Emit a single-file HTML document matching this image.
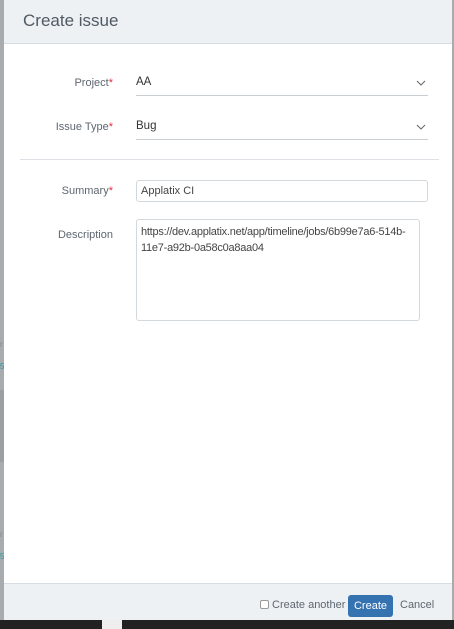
<!DOCTYPE html>
<html><head><style>
*{box-sizing:border-box;margin:0;padding:0}
body{width:454px;height:629px;overflow:hidden;background:#a9acae;font-family:"Liberation Sans",sans-serif;position:relative}
.modal{position:absolute;left:4px;top:0;width:448px;height:620px;background:#fff}
.hdr{position:absolute;left:0;top:0;width:448px;height:44px;background:#eef1f4;border-bottom:1px solid #d5dce3}
.hdr span{position:absolute;left:19px;top:11px;font-size:17px;color:#505a64}
.lbl{position:absolute;right:339px;font-size:11px;color:#5e6670;text-align:right}
.lbl i{color:#e0303a;font-style:normal}
.sel{position:absolute;left:132px;width:292px;height:21px;border-bottom:1.5px solid #c9ced3;font-size:11.5px;color:#333;padding-top:1px}
.sel svg{position:absolute;right:2px;top:5px}
.inp{position:absolute;border:1px solid #d3d8dd;border-radius:3px;font-size:11px;color:#444}
.ftr{position:absolute;left:0;top:583px;width:448px;height:37px;background:#eef1f4;border-top:1px solid #d5dce3}
.bar{position:absolute;left:0;top:620px;width:454px;height:9px;background:#222}
</style></head><body>
<div style="position:absolute;left:0;top:390px;width:4px;height:72px;background:#9b9fa1"></div>
<div style="position:absolute;left:0;top:340px;font-size:8px;color:#888">r</div>
<div style="position:absolute;left:0;top:362px;font-size:8px;color:#2a9aa4">5</div>
<div style="position:absolute;left:0;top:530px;font-size:8px;color:#888">r</div>
<div style="position:absolute;left:0;top:552px;font-size:8px;color:#2a9aa4">5</div>
<div class="modal">
<div class="hdr"><span>Create issue</span></div>
<div class="lbl" style="top:77px">Project<i>*</i></div>
<div class="sel" style="top:75px">AA<svg width="10" height="6" viewBox="0 0 10 6"><path d="M1 1L5 5L9 1" stroke="#666" fill="none"/></svg></div>
<div class="lbl" style="top:121px">Issue Type<i>*</i></div>
<div class="sel" style="top:119px">Bug<svg width="10" height="6" viewBox="0 0 10 6"><path d="M1 1L5 5L9 1" stroke="#666" fill="none"/></svg></div>
<div style="position:absolute;left:16px;top:159px;width:419px;height:1px;background:#dde1e5"></div>
<div class="lbl" style="top:185px">Summary<i>*</i></div>
<div class="inp" style="left:132px;top:180px;width:292px;height:22px;padding:4px 4px">Applatix CI</div>
<div class="lbl" style="top:229px">Description</div>
<div class="inp" style="left:132px;top:219px;width:284px;height:102px;padding:5px 4px;line-height:15.5px;letter-spacing:-0.25px">https://dev.applatix.net/app/timeline/jobs/6b99e7a6-514b-11e7-a92b-0a58c0a8aa04</div>
<div class="ftr">
<div style="position:absolute;left:256px;top:16px;width:9px;height:9px;border:1px solid #999;border-radius:2px;background:#fff"></div>
<div style="position:absolute;left:268px;top:15px;font-size:11px;color:#5e6670">Create another</div>
<div style="position:absolute;left:344px;top:11px;width:45px;height:22px;background:#3572b0;border-radius:3px;color:#fff;font-size:11px;text-align:center;line-height:22px">Create</div>
<div style="position:absolute;left:396px;top:15px;font-size:11px;color:#5e6670">Cancel</div>
</div>
</div>
<div class="bar"><div style="position:absolute;left:102px;top:0;width:20px;height:9px;background:#eee"></div></div>
</body></html>
